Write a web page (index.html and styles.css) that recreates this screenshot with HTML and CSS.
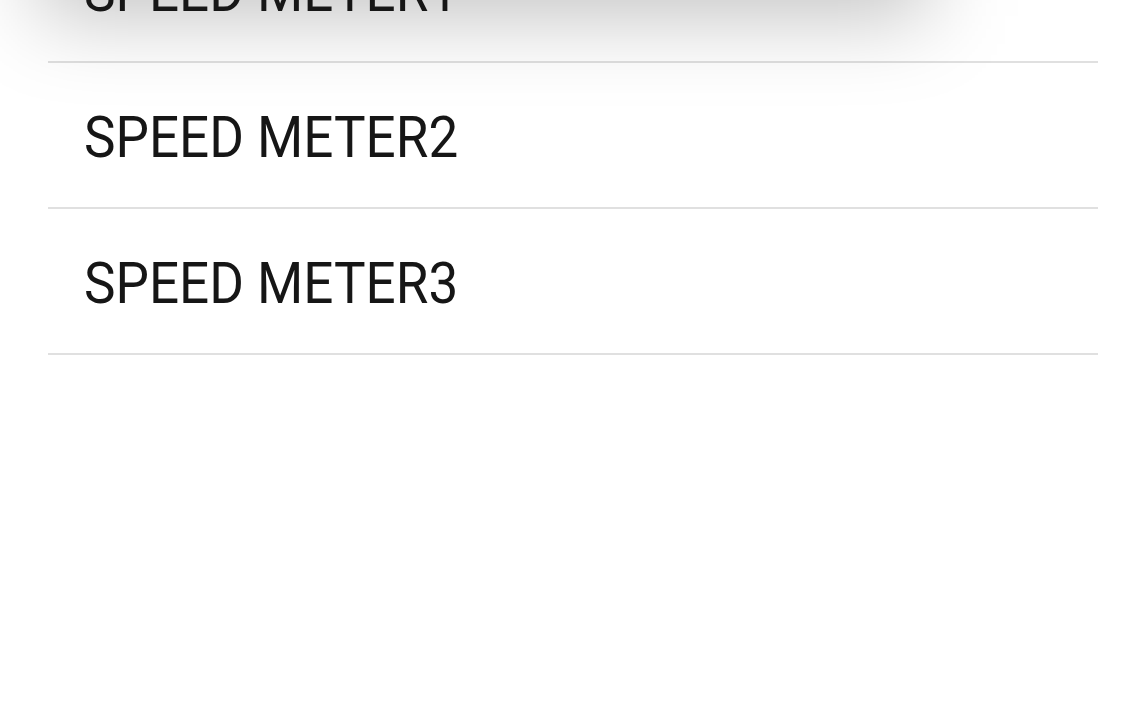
FILE: index.html
```html
<!DOCTYPE html>
<html lang="en">
<head>
  <meta charset="UTF-8">
  <title>Speed Meters</title>
  <link rel="stylesheet" href="styles.css">
</head>
<body>

<ul class="meter-list">
  <li class="meter-item dragging">
    <div class="drag-shadow"></div>
    <span class="label">SPEED METER1</span>
  </li>
  <li class="meter-item">
    <span class="label">SPEED METER2</span>
  </li>
  <li class="meter-item">
    <span class="label">SPEED METER3</span>
  </li>
</ul>

</body>
</html>
```

FILE: styles.css
```css
body {
  margin: 0;
  background: #fff;
  font-family: Roboto, 'Liberation Sans', sans-serif;
  overflow: hidden;
}

.meter-list {
  list-style: none;
  margin: -83px 48px 0 48px;
  padding: 0;
}

.meter-item {
  position: relative;
  height: 144px;
  display: flex;
  align-items: center;
  padding-left: 36px;
  border-bottom: 2px solid #e0e0e0;
}

.label {
  position: relative;
  z-index: 1;
  font-size: 53px;
  color: #161616;
  display: inline-block;
  transform: scaleY(1.07);
  margin-top: 6px;
}

/* soft shadow under the item being dragged */
.drag-shadow {
  position: absolute;
  left: -10px;
  right: 170px;
  top: -60px;
  bottom: 45px;
  background: rgba(0,0,0,0.24);
  filter: blur(42px);
  z-index: 2;
  pointer-events: none;
}

.dragging .label {
  z-index: 3;
}
```
